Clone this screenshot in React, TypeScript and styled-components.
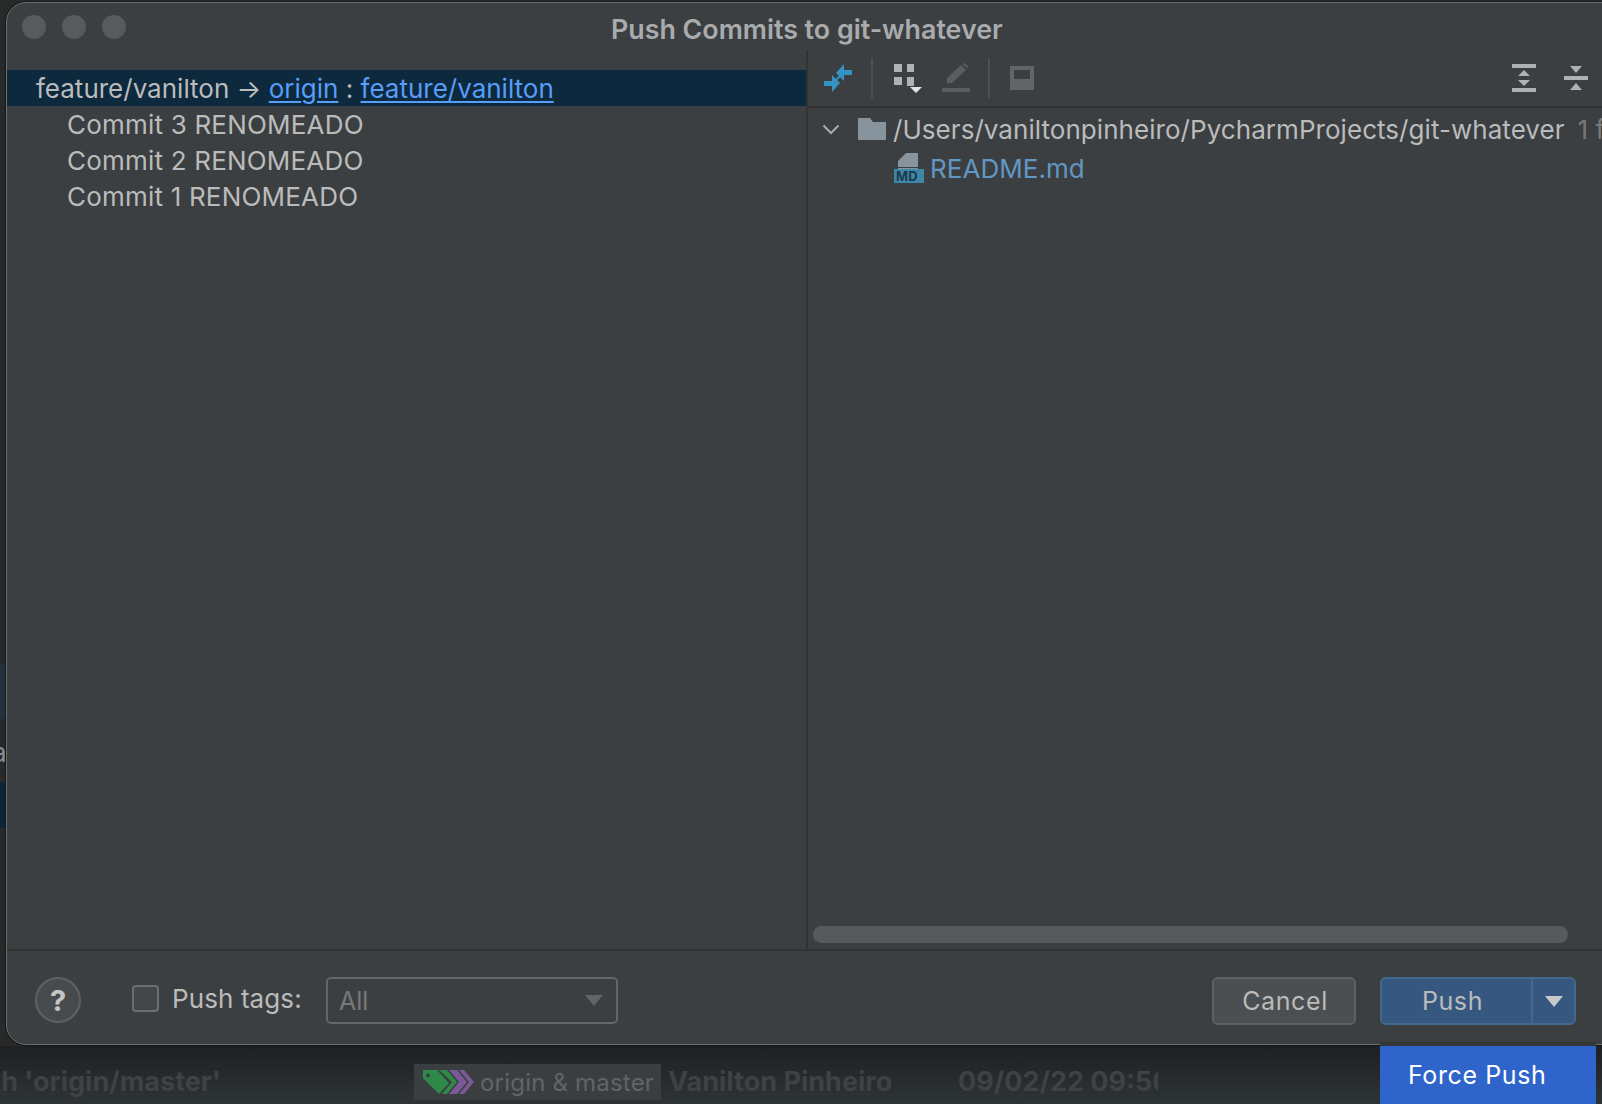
import React from "react";
import styled, { createGlobalStyle } from "styled-components";

const Global = createGlobalStyle`
  html, body { margin: 0; padding: 0; background: #1f2122; }
  body { font-family: Inter, "Liberation Sans", sans-serif; }
`;

const Page = styled.div`
  position: relative;
  width: 1602px;
  height: 1104px;
  overflow: hidden;
  background: #1f2122;
`;

const Backdrop = styled.div`
  width: 100%;
  height: 100%;
  display: flex;
  flex-direction: column;
`;

const SideStrip = styled.div`
  flex: 1;
  display: flex;
  flex-direction: column;
  background: #282929;
`;

const StripBlock = styled.div<{ $top: number; $height: number; $color: string }>`
  margin-top: ${(p) => p.$top}px;
  height: ${(p) => p.$height}px;
  background: ${(p) => p.$color};
  flex: none;
`;

const StripLetter = styled.div`
  margin-top: 20px;
  height: 30px;
  font-size: 26px;
  line-height: 30px;
  color: #8a8c8e;
  margin-left: -8px;
  flex: none;
`;

const BottomRow = styled.div`
  height: 58px;
  flex: none;
  box-sizing: border-box;
  padding-top: 18px;
  display: flex;
  align-items: flex-start;
  background: linear-gradient(#1e2021, #2e3436);
  font-size: 27px;
  font-weight: 700;
  color: #3f4244;
  white-space: nowrap;
`;

const BackMessage = styled.div`
  width: 414px;
  flex: none;
  height: 36px;
  line-height: 36px;
  overflow: hidden;
  display: flex;
  justify-content: flex-end;
  padding-right: 193px;
  box-sizing: border-box;
`;

const BackTag = styled.div`
  width: 247px;
  height: 36px;
  flex: none;
  display: flex;
  align-items: center;
  gap: 5px;
  padding-left: 9px;
  box-sizing: border-box;
  background: #3b3e40;
  color: #626466;
  font-size: 24px;
  letter-spacing: 0.2px;
  font-weight: 400;
`;

const BackAuthor = styled.div`
  width: 290px;
  margin-left: 7px;
  flex: none;
  line-height: 36px;
`;

const BackDate = styled.div`
  width: 200px;
  flex: none;
  line-height: 36px;
  overflow: hidden;
`;

const Window = styled.div`
  position: absolute;
  left: 6px;
  top: 2px;
  width: 1620px;
  height: 1043px;
  box-sizing: border-box;
  border: 1.5px solid #6e7072;
  border-radius: 20px;
  background: #3c3f41;
  box-shadow: 0 0 0 1px #141516;
  display: flex;
  flex-direction: column;
  overflow: hidden;
`;

const TitleBar = styled.div`
  position: relative;
  height: 47px;
  flex: none;
  display: flex;
  align-items: center;
  padding-left: 15px;
  gap: 16px;
`;

const Light = styled.span`
  width: 24px;
  height: 24px;
  border-radius: 50%;
  background: #585b5d;
`;

const Title = styled.div`
  position: absolute;
  left: 604px;
  top: 10px;
  font-size: 26.800px;
  line-height: 32px;
  font-weight: 600;
  color: #a9abad;
  white-space: nowrap;
`;

const Main = styled.div`
  flex: 1;
  display: flex;
  min-height: 0;
  border-bottom: 2px solid #323232;
`;

const LeftPanel = styled.div`
  width: 799px;
  flex: none;
  padding-top: 20px;
  border-right: 2px solid #323232;
  font-size: 26px;
  color: #bbbbbb;
`;

const BranchRow = styled.div`
  height: 36px;
  padding-left: 29px;
  background: #0d293e;
  line-height: 38px;
  white-space: nowrap;
`;

const Link = styled.a`
  color: #589df6;
  text-decoration: underline;
  text-underline-offset: 3px;
`;

const CommitRow = styled.div`
  height: 36px;
  padding-left: 60px;
  line-height: 38px;
  letter-spacing: 0.2px;
  white-space: nowrap;
`;

const RightPanel = styled.div`
  width: 795px;
  flex: none;
  display: flex;
  flex-direction: column;
`;

const Toolbar = styled.div`
  height: 58px;
  flex: none;
  box-sizing: border-box;
  border-bottom: 2px solid #323232;
  display: flex;
  align-items: center;
  padding-left: 16px;
`;

const ToolIcon = styled.svg<{ $left?: number }>`
  flex: none;
  margin-left: ${(p) => p.$left ?? 0}px;
  display: block;
`;

const Sep = styled.span<{ $left: number }>`
  width: 2px;
  height: 40px;
  flex: none;
  margin-left: ${(p) => p.$left}px;
  background: #4d5052;
`;

const Tree = styled.div`
  flex: 1;
  padding-top: 2px;
  font-size: 26px;
  letter-spacing: 0.05px;
  white-space: nowrap;
  color: #bbbbbb;
`;

const TreeRow = styled.div<{ $indent: number; $height: number }>`
  display: flex;
  align-items: center;
  height: ${(p) => p.$height}px;
  padding-left: ${(p) => p.$indent}px;
`;

const PathText = styled.span`
  margin-left: 7px;
`;

const FileLink = styled.span`
  color: #6297c3;
  margin-left: 6px;
`;

const Count = styled.span`
  color: #787a7c;
  margin-left: 13px;
`;

const ScrollTrack = styled.div`
  height: 24px;
  flex: none;
  padding-left: 5px;
  padding-top: 1px;
  box-sizing: border-box;
`;

const ScrollThumb = styled.div`
  width: 755px;
  height: 17px;
  border-radius: 9px;
  background: #58595b;
`;

const Footer = styled.div`
  height: 93px;
  flex: none;
  display: flex;
  align-items: flex-start;
  padding: 26px 0 0 28px;
  box-sizing: border-box;
`;

const Help = styled.div`
  width: 46px;
  height: 46px;
  box-sizing: border-box;
  border: 2px solid #5f6264;
  border-radius: 50%;
  background: #484b4d;
  color: #c4c5c6;
  font-size: 29px;
  font-weight: 700;
  display: flex;
  align-items: center;
  justify-content: center;
  flex: none;
`;

const Check = styled.span`
  width: 27px;
  height: 27px;
  margin: 8px 0 0 51px;
  box-sizing: border-box;
  border: 2px solid #6b6e70;
  border-radius: 4px;
  background: #43464a;
  flex: none;
`;

const CheckLabel = styled.span`
  margin-left: 13px;
  font-size: 26px;
  letter-spacing: 0.1px;
  line-height: 44px;
  color: #bbbbbb;
  width: 154px;
  flex: none;
  white-space: nowrap;
`;

const Combo = styled.div`
  width: 292px;
  height: 47px;
  box-sizing: border-box;
  border: 2px solid #646668;
  border-radius: 5px;
  display: flex;
  align-items: center;
  justify-content: space-between;
  padding: 0 13px 0 11px;
  font-size: 25px;
  color: #77797b;
  flex: none;
`;

const Caret = styled.span<{ $color: string }>`
  width: 0;
  height: 0;
  border-left: 9px solid transparent;
  border-right: 9px solid transparent;
  border-top: 11px solid ${(p) => p.$color};
`;

const CancelButton = styled.div`
  width: 144px;
  height: 48px;
  margin-left: 594px;
  padding-left: 2px;
  box-sizing: border-box;
  border: 2px solid #5e6163;
  border-radius: 6px;
  background: #4c4f51;
  color: #bbbbbb;
  font-size: 25px;
  letter-spacing: 0.6px;
  display: flex;
  align-items: center;
  justify-content: center;
  flex: none;
`;

const PushGroup = styled.div`
  width: 196px;
  height: 48px;
  margin-left: 24px;
  box-sizing: border-box;
  border: 2px solid #43698f;
  border-radius: 6px;
  background: #365880;
  color: #bbbbbb;
  font-size: 25px;
  letter-spacing: 0.6px;
  display: flex;
  flex: none;
`;

const PushLabel = styled.div`
  width: 151px;
  flex: none;
  box-sizing: border-box;
  padding-right: 8px;
  display: flex;
  align-items: center;
  justify-content: center;
  border-right: 2px solid #43698f;
`;

const PushArrow = styled.div`
  flex: 1;
  display: flex;
  align-items: center;
  justify-content: center;
`;

const Menu = styled.div`
  position: absolute;
  left: 1380px;
  top: 1042px;
  width: 216px;
  height: 62px;
  box-sizing: border-box;
  border-top: 4px solid #353739;
  background: #2f65ca;
  color: #ffffff;
  font-size: 25px;
  letter-spacing: 0.6px;
  padding-left: 28px;
  line-height: 58px;
  white-space: nowrap;
`;

const ArrowsIcon = () => (
  <ToolIcon width="28" height="28" viewBox="0 0 28 28">
    <path fill="#3592c4" d="M12 9 20 0V6H28V11H20V17ZM16 19 8 11V17H0V22H8V28Z" />
    <path stroke="#3592c4" strokeWidth="2" d="M11 17 17 11" />
  </ToolIcon>
);

const GroupIcon = () => (
  <ToolIcon $left={21} width="30" height="32" viewBox="0 0 30 32">
    <path fill="#afb1b3" d="M0 2H8V10H0ZM13 2H20V10H13ZM0 15H8V23H0ZM13 15H20V24H13Z" />
    <path fill="#e3e4e5" d="M16 25H28L22 31Z" />
  </ToolIcon>
);

const PencilIcon = () => (
  <ToolIcon $left={18} width="28" height="30" viewBox="0 0 28 30">
    <path fill="#5a5c5e" d="M0 25H28V29H0ZM5 20 5 15 19 2 24 7 10 20ZM20.5 1 22 0 26 3 25.5 5.500Z" />
  </ToolIcon>
);

const SaveIcon = () => (
  <ToolIcon $left={20} width="24" height="24" viewBox="0 0 24 24">
    <path fill="#626466" fillRule="evenodd" d="M0 0H24V24H0ZM4 4V13H20V4Z" />
  </ToolIcon>
);

const ExpandIcon = () => (
  <ToolIcon $left={478} width="24" height="28" viewBox="0 0 24 28">
    <path fill="#afb1b3" d="M0 0H24V4H0ZM0 24H24V28H0ZM12 6 18 12H6ZM6 16H18L12 22Z" />
  </ToolIcon>
);

const CollapseIcon = () => (
  <ToolIcon $left={28} width="24" height="24" viewBox="0 0 24 24">
    <path fill="#afb1b3" d="M0 10H24V14H0ZM6 0H18L12 7ZM12 17 18 24H6Z" />
  </ToolIcon>
);

const Chevron = () => (
  <ToolIcon width="18" height="11" viewBox="0 0 18 11">
    <path d="M1.500 1.500 9 9 16.500 1.500" fill="none" stroke="#a8aaac" strokeWidth="2" />
  </ToolIcon>
);

const FolderIcon = () => (
  <ToolIcon $left={18} width="28" height="22" viewBox="0 0 28 22">
    <path fill="#87949e" d="M0 0H12L15 4H28V22H0Z" />
  </ToolIcon>
);

const MdIcon = () => (
  <ToolIcon width="30" height="30" viewBox="0 0 30 30">
    <path fill="#87949e" d="M12 0H24V14H4V8ZM4 15H24V16H4Z" />
    <rect x="0" y="16" width="30" height="14" fill="#3d88a8" />
    <text x="2" y="28" fontSize="13" fontWeight="700" fill="#1f3a4a" fontFamily="Inter, sans-serif">MD</text>
  </ToolIcon>
);

const TagIcon = () => (
  <ToolIcon width="52" height="26" viewBox="0 0 52 26">
    <path fill="#7a5a96" d="M26 1H34L44 13 34 25H26L36 13ZM36 1H41L51 13 41 25H36L46 13Z" />
    <path fill="#2f8a4a" d="M16 1H24L34 13 24 25H19L29 13Z" />
    <path fill="#2f8a4a" fillRule="evenodd" d="M0 1H14L26 14 16 25 0 9ZM5 4.500A2 2 0 1 0 5 8.500 2 2 0 1 0 5 4.500Z" />
  </ToolIcon>
);

export default function App() {
  return (
    <Page>
      <Global />
      <Backdrop>
        <SideStrip>
          <StripBlock $top={665} $height={53} $color="#23303e" />
          <StripLetter>a</StripLetter>
          <StripBlock $top={14} $height={46} $color="#0d2538" />
        </SideStrip>
        <BottomRow>
          <BackMessage>h 'origin/master'</BackMessage>
          <BackTag>
            <TagIcon />
            origin &amp; master
          </BackTag>
          <BackAuthor>Vanilton Pinheiro</BackAuthor>
          <BackDate>09/02/22 09:56</BackDate>
        </BottomRow>
      </Backdrop>
      <Window>
        <TitleBar>
          <Light />
          <Light />
          <Light />
          <Title>Push Commits to git-whatever</Title>
        </TitleBar>
        <Main>
          <LeftPanel>
            <BranchRow>
              feature/vanilton → <Link>origin</Link> : <Link>feature/vanilton</Link>
            </BranchRow>
            <CommitRow>Commit 3 RENOMEADO</CommitRow>
            <CommitRow>Commit 2 RENOMEADO</CommitRow>
            <CommitRow>Commit 1 RENOMEADO</CommitRow>
          </LeftPanel>
          <RightPanel>
            <Toolbar>
              <ArrowsIcon />
              <Sep $left={19} />
              <GroupIcon />
              <PencilIcon />
              <Sep $left={18} />
              <SaveIcon />
              <ExpandIcon />
              <CollapseIcon />
            </Toolbar>
            <Tree>
              <TreeRow $indent={14} $height={38}>
                <Chevron />
                <FolderIcon />
                <PathText>/Users/vaniltonpinheiro/PycharmProjects/git-whatever</PathText>
                <Count>1 file</Count>
              </TreeRow>
              <TreeRow $indent={86} $height={40}>
                <MdIcon />
                <FileLink>README.md</FileLink>
              </TreeRow>
            </Tree>
            <ScrollTrack>
              <ScrollThumb />
            </ScrollTrack>
          </RightPanel>
        </Main>
        <Footer>
          <Help>?</Help>
          <Check />
          <CheckLabel>Push tags:</CheckLabel>
          <Combo>
            All
            <Caret $color="#626466" />
          </Combo>
          <CancelButton>Cancel</CancelButton>
          <PushGroup>
            <PushLabel>Push</PushLabel>
            <PushArrow>
              <Caret $color="#c8c9ca" />
            </PushArrow>
          </PushGroup>
        </Footer>
      </Window>
      <Menu>Force Push</Menu>
    </Page>
  );
}
